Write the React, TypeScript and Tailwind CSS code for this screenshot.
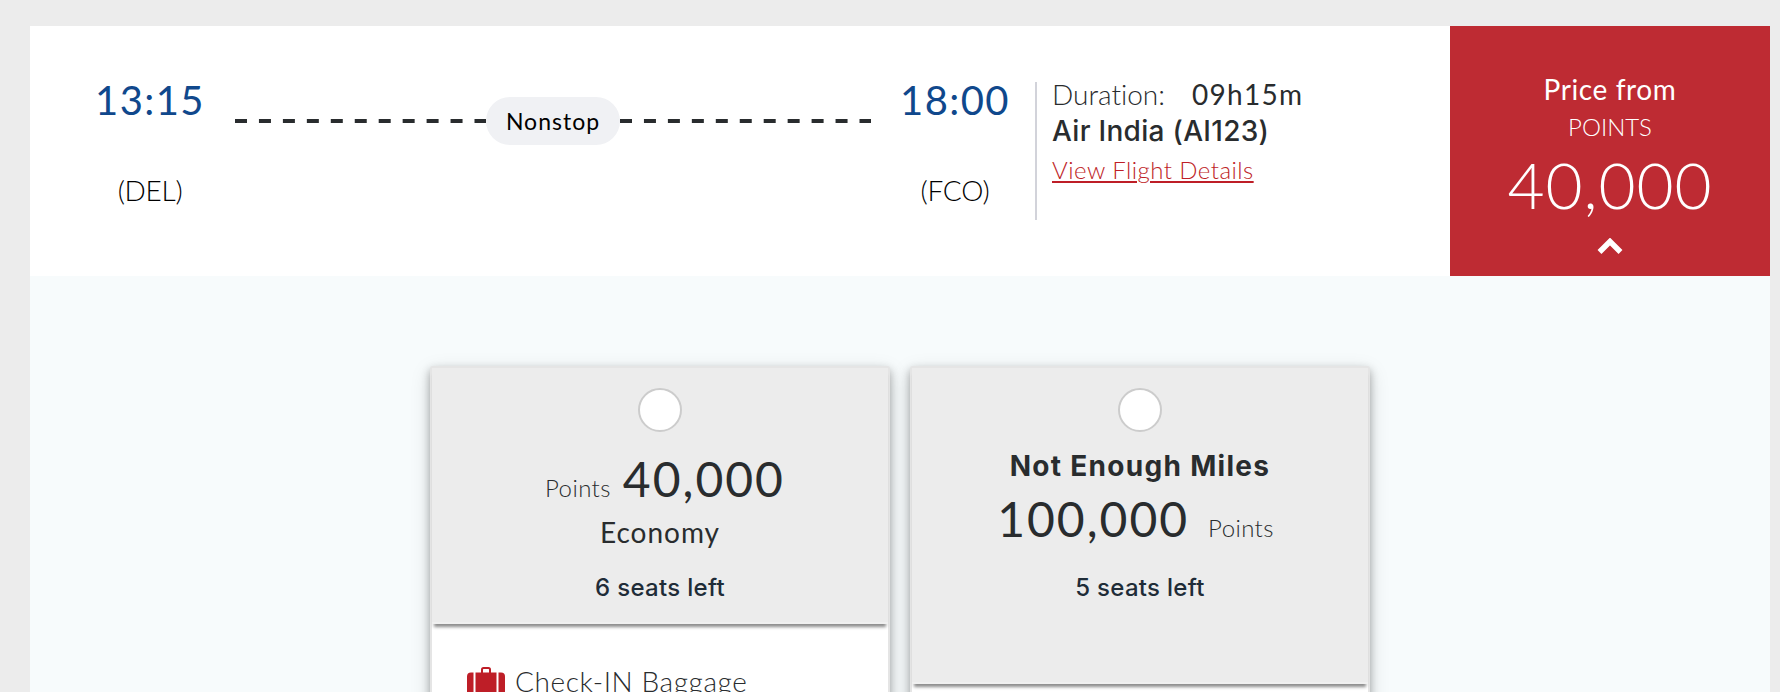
type Fare = {
  points: string
  seats: string
  cabin?: string
  warning?: string
  baggage?: string
}

const fares: Fare[] = [
  { points: '40,000', cabin: 'Economy', seats: '6 seats left', baggage: 'Check-IN Baggage' },
  { points: '100,000', warning: 'Not Enough Miles', seats: '5 seats left' },
]

function IconSuitcase() {
  return (
    <svg width="38" height="38" viewBox="0 0 38 38" fill="#be1e27" className="shrink-0">
      <path d="M15 6V2.5Q15 1 16.5 1h5Q23 1 23 2.5V6" fill="none" stroke="#be1e27" strokeWidth="2" />
      <path d="M4 5.500h2.500V35H4a4 4 0 0 1-4-4V9.500a4 4 0 0 1 4-4z" />
      <path d="M8.500 5.500h21V35h-21z" />
      <path d="M31.500 5.500H34a4 4 0 0 1 4 4V31a4 4 0 0 1-4 4h-2.500z" />
    </svg>
  )
}

function Dashes() {
  return (
    <svg width="251" height="4" className="shrink-0">
      <line x1="0" y1="2" x2="251" y2="2" stroke="#292c2e" strokeWidth="4" strokeDasharray="12 11.95" />
    </svg>
  )
}

function Stop({ time, code }: { time: string; code: string }) {
  return (
    <div className="flex w-[120px] flex-col items-center pt-[50px]">
      <span className="text-[40px] leading-[48px] tracking-[1.4px] text-[#10488c]">{time}</span>
      <span className="mt-[48px] text-[28px] font-light leading-[36px] tracking-[-0.3px] text-black">({code})</span>
    </div>
  )
}

function FareCard({ fare }: { fare: Fare }) {
  return (
    <div className="flex h-[400px] w-[460px] flex-col rounded-[3px] border-2 border-[#e5e5e5] bg-white shadow-[0_4px_8px_rgba(0,0,0,0.3),0_6px_20px_rgba(0,0,0,0.15)]">
      <div
        className={`flex shrink-0 flex-col items-center border-b-2 border-[#f0f0f0] bg-[#ececec] pt-5 shadow-[0_5px_3px_-2px_rgba(0,0,0,0.45)] ${fare.warning ? 'h-[316px]' : 'h-[256px]'}`}
      >
        <span className="size-11 rounded-full border-2 border-[#cccccc] bg-white" />
        {fare.warning && (
          <span className="mt-[16px] font-['Inter',sans-serif] text-[28px] font-bold leading-[36px] tracking-[1.3px]">
            {fare.warning}
          </span>
        )}
        {fare.warning ? (
          <div className="mr-[9px] mt-[7px] flex h-[56px] items-baseline gap-[19px] leading-[56px]">
            <span className="text-[48px] tracking-[2px]">{fare.points}</span>
            <span className="text-[24px] font-light tracking-[0.4px]">Points</span>
          </div>
        ) : (
          <div className="ml-[10px] mt-[19px] flex h-[56px] items-baseline gap-3 leading-[56px]">
            <span className="text-[24px] font-light tracking-[0.4px]">Points</span>
            <span className="text-[48px] tracking-[2px]">{fare.points}</span>
          </div>
        )}
        {fare.cabin && <span className="mt-[7px] text-[28px] leading-[36px] tracking-[1px]">{fare.cabin}</span>}
        <span
          className={`font-['Inter',sans-serif] text-[24px] font-medium leading-[32px] tracking-[0.3px] text-[#1f2c38] ${fare.cabin ? 'mt-[22px]' : 'mt-[25px]'}`}
        >
          {fare.seats}
        </span>
      </div>
      {fare.baggage && (
        <div className="flex gap-[10px] pl-[35px] pt-[43px]">
          <IconSuitcase />
          <span className="-mt-1 text-[28px] font-light leading-[36px] tracking-[0.6px]">{fare.baggage}</span>
        </div>
      )}
    </div>
  )
}

export default function App() {
  return (
    <div className="h-[692px] w-[1780px] overflow-hidden bg-[#ececec] pl-[30px] pr-[10px] pt-[26px] font-['Lato',sans-serif] text-[#292c2e] [font-variant-ligatures:none]">
      <div className="flex h-[250px] bg-white">
        <div className="flex flex-1 pl-[60px]">
          <Stop time="13:15" code="DEL" />
          <div className="ml-[25px] mt-[71px] flex h-[48px] w-[636px] items-center">
            <Dashes />
            <span className="h-12 w-[134px] shrink-0 rounded-full bg-[#f0f1f4] text-center text-[23px] leading-[48px] tracking-[1px] text-black">
              Nonstop
            </span>
            <Dashes />
          </div>
          <div className="ml-[24px]">
            <Stop time="18:00" code="FCO" />
          </div>
          <div className="ml-[20px] mt-[56px] flex h-[138px] flex-col items-start border-l-2 border-[#d2d3da] pl-[15px]">
            <div className="-mt-[6px] flex gap-[27px] text-[28px] leading-[36px]">
              <span className="font-light">Duration:</span>
              <span className="tracking-[1.3px]">09h15m</span>
            </div>
            <span className="mt-px font-['Inter',sans-serif] text-[28px] font-medium leading-[36px] tracking-[0.3px]">
              Air India (AI123)
            </span>
            <a
              className="mt-[5px] text-[24px] font-light leading-[32px] tracking-[0.45px] text-[#be1e27] underline decoration-2 underline-offset-[2px]"
              href="#"
            >
              View Flight Details
            </a>
          </div>
        </div>
        <div className="flex w-[320px] flex-col items-center bg-[#be2b33] pt-[45px] text-white">
          <span className="text-[28px] leading-[36px] tracking-[0.6px]">Price from</span>
          <span className="mt-[4px] text-[24px] font-light leading-[32px]">POINTS</span>
          <span className="mt-[4px] text-[64px] font-light leading-[76px] tracking-[0.9px]">40,000</span>
          <svg width="26" height="17" viewBox="0 0 26 17" className="mt-[15px]">
            <path d="M2.500 14 13 3.500 23.500 14" fill="none" stroke="white" strokeWidth="5.500" />
          </svg>
        </div>
      </div>
      <div className="flex h-[416px] justify-center gap-5 bg-[#f7fbfc] pt-[90px]">
        {fares.map((fare) => (
          <FareCard key={fare.points} fare={fare} />
        ))}
      </div>
    </div>
  )
}
